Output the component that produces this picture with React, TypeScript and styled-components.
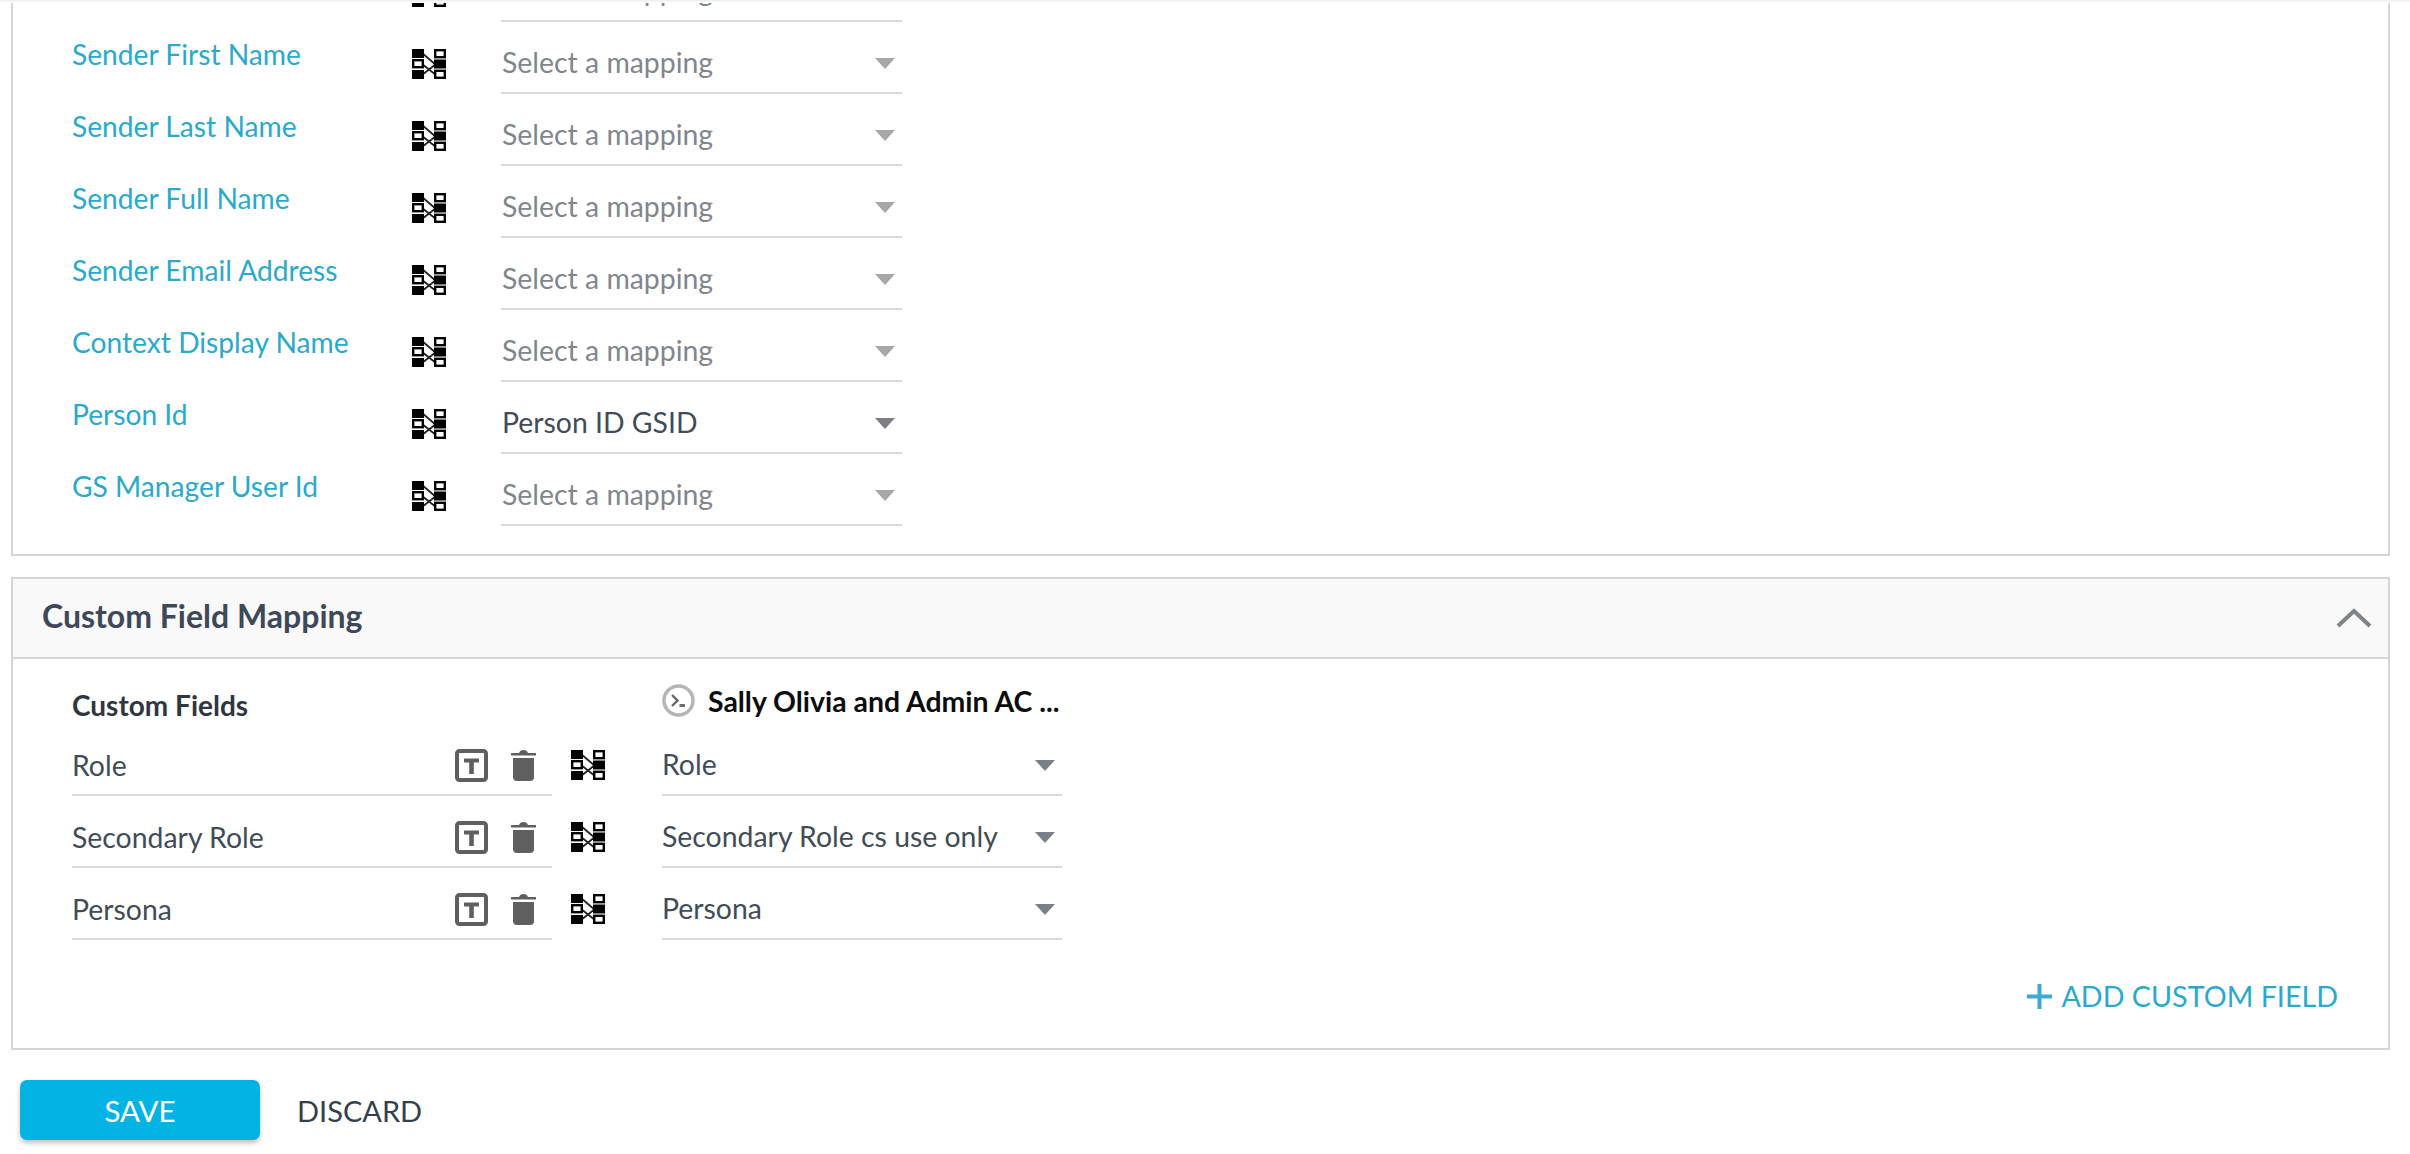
import { FC } from "react"
import styled, { createGlobalStyle } from "styled-components"

const GlobalStyle = createGlobalStyle`
  html, body {
    margin: 0;
    padding: 0;
    background: #fff;
    font-family: Lato, "Open Sans", sans-serif;
  }
`

const Page = styled.div`
  position: relative;
  height: 1154px;
  overflow: hidden;
  padding: 0 20px 0 11px;
  box-sizing: border-box;
`

const TopShadow = styled.div`
  position: absolute;
  top: 0;
  left: 0;
  right: 0;
  height: 3px;
  background: linear-gradient(#ececec, #fff);
`

const Panel = styled.section`
  border: 2px solid #d5d5d5;
  background: #fff;
`

const MappingPanel = styled(Panel)`
  margin-top: -60px;
  padding: 8px 0 28px;
`

const CustomPanel = styled(Panel)`
  margin-top: 21px;
`

const MappingRow = styled.div`
  display: flex;
  height: 72px;
  padding-left: 59px;
`

const FieldLabel = styled.div`
  width: 340px;
  padding-top: 15px;
  font-size: 28.2px;
  line-height: 34px;
  color: #29a9cb;
`

const MapIconSlot = styled.div`
  width: 89px;
  padding-top: 27px;
`

const SelectBox = styled.div<{ $width: number }>`
  display: flex;
  align-items: center;
  justify-content: space-between;
  box-sizing: border-box;
  align-self: flex-end;
  width: ${(p) => p.$width}px;
  height: 60px;
  border-bottom: 2px solid #d8d8d8;
  padding-right: 7px;
`

const SelectText = styled.span<{ $placeholder?: boolean; $flush?: boolean }>`
  padding: 0 0 2px ${(p) => (p.$flush ? 0 : 1)}px;
  font-size: 28.4px;
  color: ${(p) => (p.$placeholder ? "#7f868e" : "#414c57")};
`

const Caret = styled.span<{ $dark?: boolean }>`
  width: 0;
  height: 0;
  border-left: 10px solid transparent;
  border-right: 10px solid transparent;
  border-top: 11px solid ${(p) => (p.$dark ? "#7b8088" : "#a5a7ab")};
`

const PanelHeader = styled.header`
  display: flex;
  align-items: center;
  justify-content: space-between;
  box-sizing: content-box;
  height: 78px;
  padding: 0 16px 0 29px;
  background: #f9f9fa;
  border-bottom: 2px solid #d5d5d5;
`

const PanelTitle = styled.h2`
  margin: 0 0 6px;
  font-size: 32px;
  font-weight: 700;
  color: #3d4858;
`

const CustomBody = styled.div`
  padding: 0 0 0 59px;
`

const TitleRow = styled.div`
  display: flex;
  align-items: center;
  box-sizing: border-box;
  height: 65px;
  padding-top: 18px;
`

const FieldsTitle = styled.div`
  width: 590px;
  padding-top: 8px;
  font-size: 28px;
  font-weight: 700;
  color: #2f3640;
`

const SourceTitle = styled.div`
  display: flex;
  align-items: center;
  gap: 13px;
  font-size: 28.4px;
  font-weight: 700;
  color: #0c0c0c;
`

const CustomRow = styled.div`
  display: flex;
  align-items: flex-end;
  height: 72px;
`

const FieldInput = styled.div`
  display: flex;
  align-items: center;
  box-sizing: border-box;
  width: 480px;
  height: 60px;
  border-bottom: 2px solid #d8d8d8;
`

const FieldName = styled.span`
  flex: 1;
  font-size: 28.4px;
  color: #414c57;
`

const RowIcons = styled.div`
  display: flex;
  align-items: center;
  gap: 23px;
  margin-right: 16px;
`

const CustomMapSlot = styled.div`
  width: 110px;
  padding: 0 0 13px 19px;
  box-sizing: border-box;
`

const AddRow = styled.div`
  display: flex;
  justify-content: flex-end;
  align-items: center;
  gap: 9px;
  height: 108px;
  padding: 4px 50px 0 0;
  box-sizing: border-box;
  font-size: 28.7px;
  color: #29a9cb;
`

const Footer = styled.footer`
  display: flex;
  align-items: center;
  gap: 37px;
  margin-top: 30px;
  padding-left: 9px;
`

const SaveButton = styled.button`
  width: 240px;
  height: 60px;
  border: 0;
  border-radius: 7px;
  background: #03b3e4;
  box-shadow: 0 3px 5px rgba(0, 0, 0, 0.25);
  color: #fff;
  font: 400 29.5px Lato, sans-serif;
`

const DiscardButton = styled.button`
  border: 0;
  padding: 0;
  background: none;
  color: #343f4e;
  font: 400 29px Lato, sans-serif;
`

const MapIcon: FC = () => (
  <svg width="34" height="30" viewBox="0 0 34 30">
    <path d="M10 4 L24 16 M10 15 L24 26 M10 26 L24 15" stroke="#222" strokeWidth="1.8" fill="none" />
    <rect x="0" y="0" width="12" height="9" fill="#000" />
    <rect x="1.2" y="11.2" width="9.6" height="7" fill="#fff" stroke="#000" strokeWidth="2.4" />
    <rect x="0" y="21" width="12" height="9" fill="#000" />
    <rect x="23.2" y="1.2" width="9.6" height="7" fill="#fff" stroke="#000" strokeWidth="2.4" />
    <rect x="22" y="10.5" width="12" height="9" fill="#000" />
    <rect x="23.2" y="21.8" width="9.6" height="7" fill="#fff" stroke="#000" strokeWidth="2.4" />
  </svg>
)

const TextTypeIcon: FC = () => (
  <svg width="33" height="33" viewBox="0 0 33 33">
    <rect x="2" y="2" width="29" height="29" rx="2.5" fill="#fff" stroke="#5f5f5f" strokeWidth="4" />
    <path d="M9 9.5 H24 V13.5 H18.8 V25 H14.2 V13.5 H9 Z" fill="#5f5f5f" />
  </svg>
)

const TrashIcon: FC = () => (
  <svg width="25" height="32" viewBox="0 0 25 32">
    <path d="M0 4 H8 Q9 1 12.5 1 Q16 1 17 4 H25 V6.5 H0 Z" fill="#5f5f5f" />
    <path d="M2 9 H23 V28 Q23 32 19 32 H6 Q2 32 2 28 Z" fill="#5f5f5f" />
  </svg>
)

const SourceIcon: FC = () => (
  <svg width="33" height="33" viewBox="0 0 33 33">
    <circle cx="16.5" cy="16.5" r="14.5" fill="#fff" stroke="#b5b5b5" strokeWidth="3.5" />
    <path d="M10 11 L15.5 16.5 L10 22" fill="none" stroke="#666" strokeWidth="2.4" />
    <path d="M17.5 21.5 H23" fill="none" stroke="#666" strokeWidth="2.8" />
  </svg>
)

const ChevronUp: FC = () => (
  <svg width="36" height="22" viewBox="0 0 36 22">
    <path d="M2 19 L18 4 L34 19" fill="none" stroke="#7f8488" strokeWidth="4" />
  </svg>
)

const PlusIcon: FC = () => (
  <svg width="25" height="25" viewBox="0 0 25 25">
    <path d="M12.5 0 V25 M0 12.5 H25" stroke="#3ea9d6" strokeWidth="4" />
  </svg>
)

const standardFields: { label: string; value?: string }[] = [
  { label: "" },
  { label: "Sender First Name" },
  { label: "Sender Last Name" },
  { label: "Sender Full Name" },
  { label: "Sender Email Address" },
  { label: "Context Display Name" },
  { label: "Person Id", value: "Person ID GSID" },
  { label: "GS Manager User Id" },
]

const customFields = [
  { name: "Role", value: "Role" },
  { name: "Secondary Role", value: "Secondary Role cs use only" },
  { name: "Persona", value: "Persona" },
]

export default function App() {
  return (
    <Page>
      <GlobalStyle />
      <MappingPanel>
        {standardFields.map((field, i) => (
          <MappingRow key={i}>
            <FieldLabel>{field.label}</FieldLabel>
            <MapIconSlot>
              <MapIcon />
            </MapIconSlot>
            <SelectBox $width={401}>
              <SelectText $placeholder={!field.value}>{field.value ?? "Select a mapping"}</SelectText>
              <Caret $dark={!!field.value} />
            </SelectBox>
          </MappingRow>
        ))}
      </MappingPanel>

      <CustomPanel>
        <PanelHeader>
          <PanelTitle>Custom Field Mapping</PanelTitle>
          <ChevronUp />
        </PanelHeader>
        <CustomBody>
          <TitleRow>
            <FieldsTitle>Custom Fields</FieldsTitle>
            <SourceTitle>
              <SourceIcon />
              Sally Olivia and Admin AC ...
            </SourceTitle>
          </TitleRow>
          {customFields.map((field) => (
            <CustomRow key={field.name}>
              <FieldInput>
                <FieldName>{field.name}</FieldName>
                <RowIcons>
                  <TextTypeIcon />
                  <TrashIcon />
                </RowIcons>
              </FieldInput>
              <CustomMapSlot>
                <MapIcon />
              </CustomMapSlot>
              <SelectBox $width={400}>
                <SelectText $flush>{field.value}</SelectText>
                <Caret $dark />
              </SelectBox>
            </CustomRow>
          ))}
          <AddRow>
            <PlusIcon />
            ADD CUSTOM FIELD
          </AddRow>
        </CustomBody>
      </CustomPanel>

      <Footer>
        <SaveButton>SAVE</SaveButton>
        <DiscardButton>DISCARD</DiscardButton>
      </Footer>
      <TopShadow />
    </Page>
  )
}
